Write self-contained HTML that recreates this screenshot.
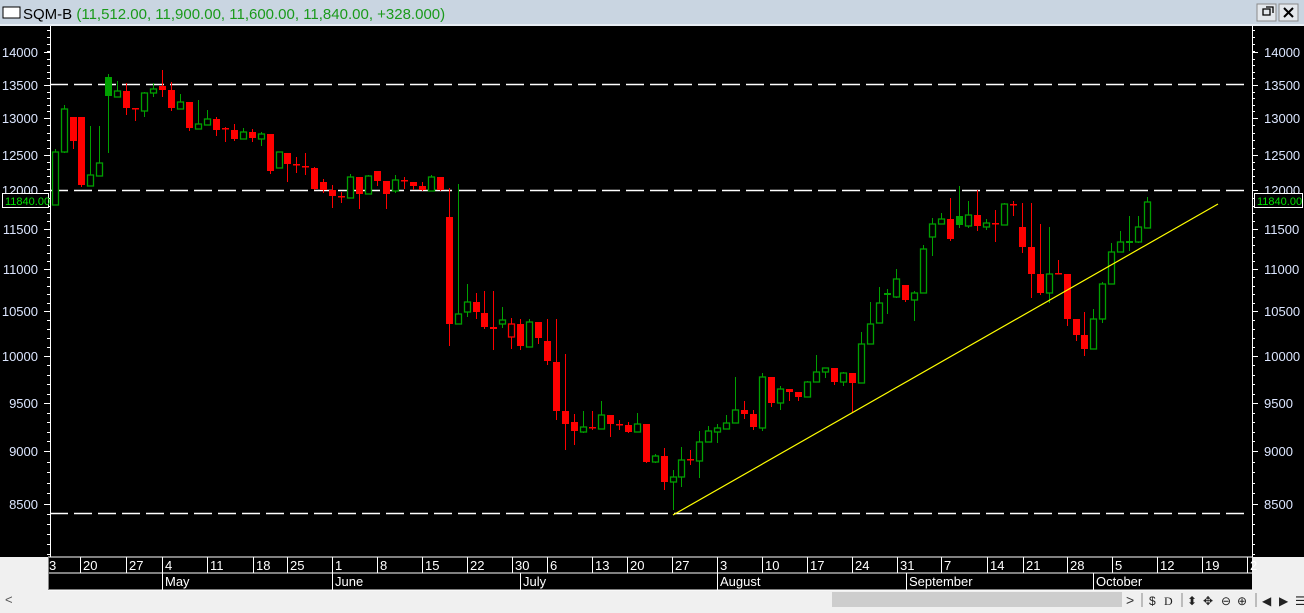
<!DOCTYPE html>
<html><head><meta charset="utf-8"><style>
html,body{margin:0;padding:0;width:1304px;height:613px;overflow:hidden;background:#f0f0f0;font-family:"Liberation Sans",Arial,sans-serif}
</style></head><body>
<svg id="s" width="1304" height="613" xmlns="http://www.w3.org/2000/svg" style="position:absolute;left:0;top:0">
<rect x="0" y="0" width="1304" height="613" fill="#f0f0f0"/>
<rect x="0" y="0" width="1304" height="25" fill="#c9d5e1"/>
<rect x="0" y="24" width="1304" height="2" fill="#e8eef4"/>
<rect x="3" y="7" width="17" height="11" fill="#fff" stroke="#000" stroke-width="1"/>
<text x="23" y="19" font-size="15" fill="#000">SQM-B <tspan fill="#1a9a1a">(11,512.00, 11,900.00, 11,600.00, 11,840.00, +328.000)</tspan></text>
<rect x="1257" y="4" width="19" height="17" fill="#e4e8ec" stroke="#8a8a8a"/>
<rect x="1279" y="4" width="19" height="17" fill="#e4e8ec" stroke="#8a8a8a"/>
<path d="M1263 9h7v6h-7zM1266 7h7v6" fill="none" stroke="#000" stroke-width="1.3"/>
<path d="M1284 8l9 9M1293 8l-9 9" stroke="#000" stroke-width="2"/>
<rect x="0" y="26" width="1304" height="531" fill="#000"/>
<rect x="48" y="557" width="1204" height="33" fill="#000"/>
<line x1="48" y1="573" x2="1252" y2="573" stroke="#fff"/>
<line x1="48" y1="557" x2="1252" y2="557" stroke="#fff"/>
<line x1="48" y1="590" x2="1252" y2="590" stroke="#fff"/>
<line x1="48.5" y1="557" x2="48.5" y2="590" stroke="#888"/>
<g id="g"></g>
<rect x="832" y="592" width="290" height="15" fill="#cdcdcd"/>
<text x="5" y="604" font-size="13" fill="#555">&lt;</text>
<text x="1126" y="605" font-size="14" fill="#333">&gt;</text>
<g font-size="12" fill="#222">
<line x1="1142" y1="593" x2="1142" y2="607" stroke="#888"/>
<text x="1149" y="605">$</text><text x="1164" y="605" font-family="Liberation Serif">D</text>
<line x1="1182" y1="593" x2="1182" y2="607" stroke="#888"/>
<text x="1187" y="605">⬍</text><text x="1203" y="605">✥</text><text x="1221" y="605">⊖</text><text x="1237" y="605">⊕</text>
<line x1="1256" y1="593" x2="1256" y2="607" stroke="#888"/>
<text x="1262" y="605">◀</text><text x="1279" y="605">▶</text><text x="1295" y="605">☰</text>
</g>
</svg>
<script>
var g=document.getElementById('g'),h='';
function L(a,b,c,d,col,w){h+='<line x1="'+a+'" y1="'+b+'" x2="'+c+'" y2="'+d+'" stroke="'+col+'" stroke-width="'+(w||1)+'"/>';}
function T(x,y,t,col,anc,sz){h+='<text x="'+x+'" y="'+y+'" fill="'+col+'" font-size="'+(sz||13)+'"'+(anc?' text-anchor="'+anc+'"':'')+'>'+t+'</text>';}
// dashed lines
[84.5,190.5,513.5].forEach(function(y){h+='<line x1="50" y1="'+y+'" x2="1250" y2="'+y+'" stroke="#fff" stroke-width="1.5" stroke-dasharray="18 6"/>';});
// axes
L(50.5,26,50.5,557,'#fff');L(1252.5,26,1252.5,557,'#fff');
var lv=[[14000,52],[13500,85],[13000,118],[12500,155],[12000,190],[11500,229],[11000,269],[10500,311],[10000,356],[9500,403],[9000,451],[8500,504]];
for(var i=0;i<lv.length;i++){var y=lv[i][1];
 T(38,y+5,lv[i][0],'#dce6ff','end');T(1264,y+5,lv[i][0],'#dce6ff');
 L(44,y+.5,50,y+.5,'#fff');L(1252,y+.5,1258,y+.5,'#fff');
 if(i<lv.length-1){var n=lv[i+1][1];for(var k=1;k<5;k++){var yy=Math.round(y+(n-y)*k/5)+.5;L(47,yy,50,yy,'#fff');L(1252,yy,1255,yy,'#fff');}}
}
for(var yy=30;yy<52;yy+=7){L(47,yy+.5,50,yy+.5,'#fff');L(1252,yy+.5,1255,yy+.5,'#fff');}
for(var yy=514;yy<556;yy+=10){L(47,yy+.5,50,yy+.5,'#fff');L(1252,yy+.5,1255,yy+.5,'#fff');}
// price boxes
h+='<rect x="2.5" y="193.5" width="46" height="14" fill="#000" stroke="#fff"/>';T(5,205,'11840.00','#00e000','',11);
h+='<rect x="1254.5" y="193.5" width="48" height="14" fill="#000" stroke="#fff"/>';T(1257,205,'11840.00','#00e000','',11);
// candles [x,hi,lo,bt,bb,type]
var c=[[55,149,205,152,205,'g'],[64,105,153,109,152,'g'],[73,117,149,117,141,'r'],[81,117,187,117,185,'r'],[90,126,186,175,186,'g'],[99,126,176,163,176,'g'],[108,74,153,77,96,'G'],[117,81,97,91,97,'g'],[126,83,115,91,108,'r'],[135,108,121,108,109,'r'],[144,92,117,93,111,'g'],[153,83,97,89,93,'g'],[162,70,97,86,90,'r'],[171,82,111,90,108,'r'],[180,94,109,102,109,'g'],[189,102,131,102,128,'r'],[198,100,129,124,129,'g'],[207,110,125,119,125,'g'],[216,117,136,119,130,'r'],[225,127,142,128,129,'r'],[234,124,141,130,139,'r'],[243,128,139,132,139,'g'],[252,129,142,132,138,'r'],[261,132,146,134,139,'g'],[270,134,174,134,171,'r'],[279,152,168,152,168,'g'],[287,153,182,153,164,'r'],[296,157,173,164,165,'r'],[305,153,175,166,167,'r'],[314,167,190,168,189,'r'],[323,179,193,182,190,'r'],[332,185,208,190,196,'r'],[341,192,203,196,197,'r'],[350,174,198,177,198,'g'],[359,177,209,177,194,'r'],[368,175,194,176,194,'g'],[377,171,186,171,181,'r'],[386,181,209,181,194,'r'],[395,175,193,180,191,'g'],[404,177,189,180,181,'r'],[413,182,190,182,186,'r'],[422,182,191,186,190,'r'],[431,175,191,177,191,'g'],[440,177,191,177,190,'r'],
[449,188,346,217,324,'r'],[458,184,324,314,324,'g'],[467,284,317,302,312,'g'],[476,293,319,302,312,'r'],[484,291,329,313,327,'r'],[493,291,350,327,329,'r'],[502,307,328,320,324,'g'],[511,318,349,324,337,'h'],[520,319,350,324,346,'r'],[529,319,347,322,347,'g'],[538,322,344,322,338,'r'],[547,319,365,341,361,'r'],[556,319,420,362,411,'r'],[565,354,450,411,424,'r'],[574,414,445,422,431,'r'],[583,411,433,427,432,'g'],[592,411,430,427,428,'r'],[601,401,429,415,429,'g'],[610,415,437,415,424,'r'],[619,420,430,424,425,'r'],[628,422,433,425,432,'r'],[637,413,432,424,432,'g'],[646,424,463,424,462,'r'],[655,454,463,456,462,'g'],[664,448,490,456,482,'r'],[673,470,510,477,482,'g'],[681,447,487,460,477,'g'],[690,450,465,459,460,'r'],[699,431,478,442,461,'g'],[708,426,442,431,442,'g'],[717,424,443,428,432,'g'],
[726,415,429,423,429,'g'],[735,377,423,410,423,'g'],[744,401,419,410,414,'r'],[753,410,430,414,427,'r'],[762,373,431,377,428,'g'],[771,377,407,377,403,'r'],[780,386,410,389,403,'g'],[789,389,401,389,392,'r'],[798,392,401,392,397,'r'],[807,381,397,382,397,'g'],[816,355,382,372,382,'g'],[825,368,378,368,372,'g'],[834,368,385,368,382,'r'],[843,372,386,373,382,'g'],[852,373,413,373,383,'r'],[861,332,383,344,383,'g'],[870,302,344,324,344,'g'],[879,287,323,303,323,'g'],[887,289,314,293,295,'G'],[896,269,298,279,297,'g'],[905,285,302,285,300,'r'],[914,291,321,293,300,'g'],[923,245,293,249,293,'g'],[932,218,256,224,237,'g'],[941,213,224,219,224,'g'],[950,198,241,219,239,'r'],[959,186,228,216,225,'G'],[968,201,228,215,226,'g'],
[977,190,231,215,226,'r'],[986,219,230,223,227,'g'],[995,210,242,223,224,'r'],[1004,203,225,204,225,'g'],[1013,201,216,204,205,'r'],[1022,203,253,227,247,'r'],[1031,203,298,247,274,'r'],[1040,224,295,274,293,'r'],[1049,227,303,274,293,'g'],[1058,260,274,273,274,'r'],[1067,274,326,274,319,'r'],[1076,319,341,319,335,'r'],[1084,312,356,335,349,'r'],[1093,309,349,319,349,'g'],[1102,282,323,284,319,'g'],[1111,243,284,252,284,'g'],[1120,231,252,242,252,'g'],[1129,216,251,241,243,'G'],[1138,216,243,227,242,'g'],[1147,197,228,202,228,'g']];
var GR='#00a000',RD='#ff0000';
c.forEach(function(d){var x=d[0],col=(d[5]=='g'||d[5]=='G')?GR:RD;
 L(x+.5,d[1],x+.5,d[2],col);
 var bh=Math.max(d[4]-d[3],1.5);
 if(d[5]=='g'||d[5]=='h')h+='<rect x="'+(x-2.5)+'" y="'+d[3]+'" width="6" height="'+bh+'" fill="#000" stroke="'+col+'" stroke-width="1.3"/>';
 else h+='<rect x="'+(x-3)+'" y="'+d[3]+'" width="7" height="'+bh+'" fill="'+col+'"/>';
});
L(673,515,1218,204,'#ffff00',1.2);
// date rows
var sep=[80,126,162,207,253,287,332,377,422,467,512,547,592,627,672,717,762,807,852,897,941,987,1023,1067,1112,1157,1202,1247];
var lab=['20','27','4','11','18','25','1','8','15','22','30','6','13','20','27','3','10','17','24','31','7','14','21','28','5','12','19','2'];
T(49,570,'3','#fff','',13);
for(var i=0;i<sep.length;i++){L(sep[i]+.5,557,sep[i]+.5,573,'#fff');T(sep[i]+3,570,lab[i],'#fff');}
var ms=[[162,'May'],[332,'June'],[520,'July'],[717,'August'],[906,'September'],[1093,'October']];
ms.forEach(function(m){L(m[0]+.5,573,m[0]+.5,590,'#fff');T(m[0]+3,586,m[1],'#fff');});
g.innerHTML=h;
</script>
</body></html>
